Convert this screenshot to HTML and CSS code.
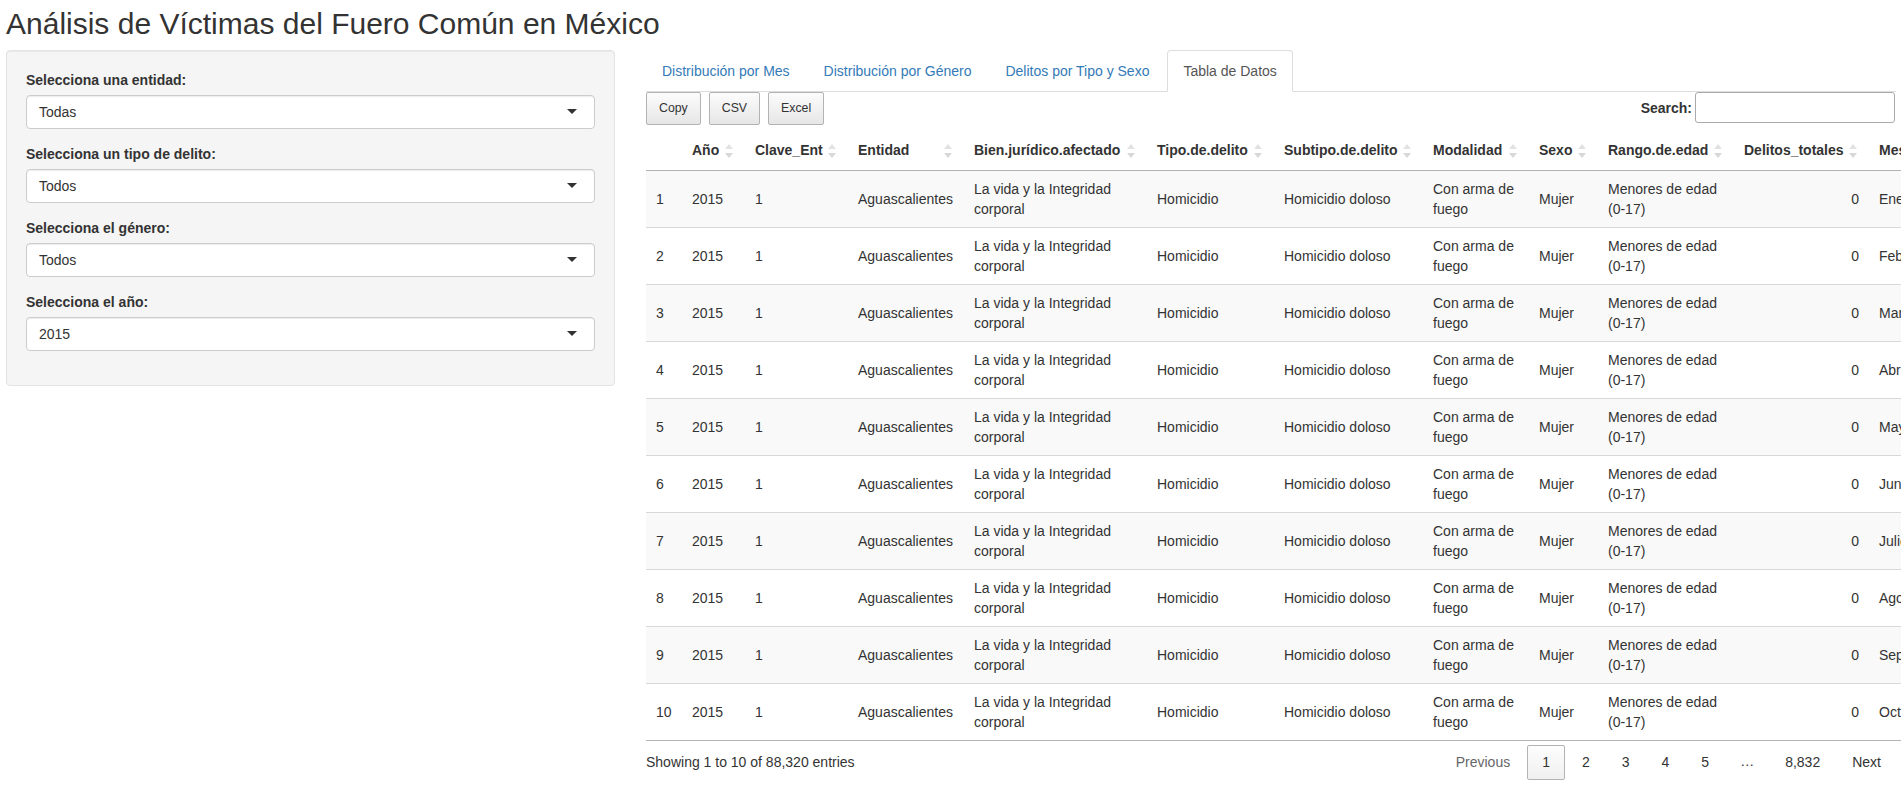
FILE: index.html
```html
<!DOCTYPE html>
<html lang="es">
<head>
<meta charset="utf-8">
<title>Análisis de Víctimas del Fuero Común en México</title>
<link rel="stylesheet" href="styles.css">
</head>
<body>
<div class="page">
  <h2 class="title">Análisis de Víctimas del Fuero Común en México</h2>
  <div class="layout">
    <aside class="well">
      <div class="form-group">
        <label class="lbl">Selecciona una entidad:</label>
        <div class="select">Todas</div>
      </div>
      <div class="form-group">
        <label class="lbl">Selecciona un tipo de delito:</label>
        <div class="select">Todos</div>
      </div>
      <div class="form-group">
        <label class="lbl">Selecciona el género:</label>
        <div class="select">Todos</div>
      </div>
      <div class="form-group">
        <label class="lbl">Selecciona el año:</label>
        <div class="select">2015</div>
      </div>
    </aside>
    <main class="main">
      <ul class="tabs">
        <li><a class="tab">Distribución por Mes</a></li>
        <li><a class="tab">Distribución por Género</a></li>
        <li><a class="tab">Delitos por Tipo y Sexo</a></li>
        <li><a class="tab active">Tabla de Datos</a></li>
      </ul>
      <div class="dt-wrap">
        <div class="toolbar">
          <div class="dt-buttons">
            <button class="dt-btn">Copy</button>
            <button class="dt-btn">CSV</button>
            <button class="dt-btn">Excel</button>
          </div>
          <div class="filter">
            <span class="filter-lbl">Search:</span>
            <span class="filter-input"></span>
          </div>
        </div>
        <table class="dtable">
          <colgroup>
            <col class="c-idx"><col class="c-ano"><col class="c-clave"><col class="c-ent"><col class="c-bien"><col class="c-tipo"><col class="c-sub"><col class="c-mod"><col class="c-sexo"><col class="c-rango"><col class="c-tot"><col class="c-mes">
          </colgroup>
          <thead>
            <tr>
              <th></th>
              <th class="sort">Año<span class="arrows"></span></th>
              <th class="sort">Clave_Ent<span class="arrows"></span></th>
              <th class="sort">Entidad<span class="arrows"></span></th>
              <th class="sort">Bien.jurídico.afectado<span class="arrows"></span></th>
              <th class="sort">Tipo.de.delito<span class="arrows"></span></th>
              <th class="sort">Subtipo.de.delito<span class="arrows"></span></th>
              <th class="sort">Modalidad<span class="arrows"></span></th>
              <th class="sort">Sexo<span class="arrows"></span></th>
              <th class="sort">Rango.de.edad<span class="arrows"></span></th>
              <th class="sort">Delitos_totales<span class="arrows"></span></th>
              <th class="sort">Mes<span class="arrows"></span></th>
            </tr>
          </thead>
          <tbody>
            <tr><td>1</td><td>2015</td><td>1</td><td>Aguascalientes</td><td>La vida y la Integridad corporal</td><td>Homicidio</td><td>Homicidio doloso</td><td>Con arma de fuego</td><td>Mujer</td><td>Menores de edad (0-17)</td><td class="num">0</td><td>Enero</td></tr>
            <tr><td>2</td><td>2015</td><td>1</td><td>Aguascalientes</td><td>La vida y la Integridad corporal</td><td>Homicidio</td><td>Homicidio doloso</td><td>Con arma de fuego</td><td>Mujer</td><td>Menores de edad (0-17)</td><td class="num">0</td><td>Febrero</td></tr>
            <tr><td>3</td><td>2015</td><td>1</td><td>Aguascalientes</td><td>La vida y la Integridad corporal</td><td>Homicidio</td><td>Homicidio doloso</td><td>Con arma de fuego</td><td>Mujer</td><td>Menores de edad (0-17)</td><td class="num">0</td><td>Marzo</td></tr>
            <tr><td>4</td><td>2015</td><td>1</td><td>Aguascalientes</td><td>La vida y la Integridad corporal</td><td>Homicidio</td><td>Homicidio doloso</td><td>Con arma de fuego</td><td>Mujer</td><td>Menores de edad (0-17)</td><td class="num">0</td><td>Abril</td></tr>
            <tr><td>5</td><td>2015</td><td>1</td><td>Aguascalientes</td><td>La vida y la Integridad corporal</td><td>Homicidio</td><td>Homicidio doloso</td><td>Con arma de fuego</td><td>Mujer</td><td>Menores de edad (0-17)</td><td class="num">0</td><td>Mayo</td></tr>
            <tr><td>6</td><td>2015</td><td>1</td><td>Aguascalientes</td><td>La vida y la Integridad corporal</td><td>Homicidio</td><td>Homicidio doloso</td><td>Con arma de fuego</td><td>Mujer</td><td>Menores de edad (0-17)</td><td class="num">0</td><td>Junio</td></tr>
            <tr><td>7</td><td>2015</td><td>1</td><td>Aguascalientes</td><td>La vida y la Integridad corporal</td><td>Homicidio</td><td>Homicidio doloso</td><td>Con arma de fuego</td><td>Mujer</td><td>Menores de edad (0-17)</td><td class="num">0</td><td>Julio</td></tr>
            <tr><td>8</td><td>2015</td><td>1</td><td>Aguascalientes</td><td>La vida y la Integridad corporal</td><td>Homicidio</td><td>Homicidio doloso</td><td>Con arma de fuego</td><td>Mujer</td><td>Menores de edad (0-17)</td><td class="num">0</td><td>Agosto</td></tr>
            <tr><td>9</td><td>2015</td><td>1</td><td>Aguascalientes</td><td>La vida y la Integridad corporal</td><td>Homicidio</td><td>Homicidio doloso</td><td>Con arma de fuego</td><td>Mujer</td><td>Menores de edad (0-17)</td><td class="num">0</td><td>Septiembre</td></tr>
            <tr><td>10</td><td>2015</td><td>1</td><td>Aguascalientes</td><td>La vida y la Integridad corporal</td><td>Homicidio</td><td>Homicidio doloso</td><td>Con arma de fuego</td><td>Mujer</td><td>Menores de edad (0-17)</td><td class="num">0</td><td>Octubre</td></tr>
          </tbody>
        </table>
        <div class="footer">
          <div class="info">Showing 1 to 10 of 88,320 entries</div>
          <div class="paginate">
            <span class="pbtn disabled">Previous</span>
            <span class="pbtn current">1</span>
            <span class="pbtn">2</span>
            <span class="pbtn">3</span>
            <span class="pbtn">4</span>
            <span class="pbtn">5</span>
            <span class="ellipsis">…</span>
            <span class="pbtn">8,832</span>
            <span class="pbtn">Next</span>
          </div>
        </div>
      </div>
    </main>
  </div>
</div>
</body>
</html>
```
FILE: styles.css
```css
html, body {
  margin: 0;
  padding: 0;
  overflow-x: hidden;
  background: #fff;
}
body {
  font-family: "Liberation Sans", Arial, Helvetica, sans-serif;
  font-size: 14px;
  line-height: 20px;
  color: #333;
}
.page {
  padding-left: 6px;
}
.title {
  margin: 7px 0 10px;
  font-size: 30px;
  line-height: 33px;
  font-weight: 500;
  color: #333;
}
.layout {
  display: flex;
  align-items: flex-start;
}
.well {
  box-sizing: border-box;
  width: 609px;
  flex: none;
  background: #f5f5f5;
  border: 1px solid #e3e3e3;
  border-radius: 4px;
  box-shadow: inset 0 1px 1px rgba(0,0,0,0.05);
  padding: 19px;
}
.form-group {
  margin-bottom: 15px;
}
.lbl {
  display: block;
  font-weight: bold;
  margin-bottom: 5px;
}
.select {
  position: relative;
  box-sizing: border-box;
  height: 34px;
  padding: 6px 12px;
  background: #fff;
  border: 1px solid #ccc;
  border-radius: 4px;
  box-shadow: inset 0 1px 1px rgba(0,0,0,0.075);
  color: #333;
}
.select::after {
  content: "";
  position: absolute;
  right: 17px;
  top: 50%;
  margin-top: -3px;
  border-style: solid;
  border-width: 5px 5px 0 5px;
  border-color: #333 transparent transparent transparent;
}
.main {
  width: 1250px;
  flex: none;
  margin-left: 31px;
}
.tabs {
  list-style: none;
  margin: 0;
  padding: 0;
  display: flex;
  border-bottom: 1px solid #ddd;
}
.tabs li {
  margin-bottom: -1px;
}
.tab {
  display: block;
  margin-right: 2px;
  padding: 10px 15px;
  line-height: 20px;
  border: 1px solid transparent;
  border-radius: 4px 4px 0 0;
  color: #337ab7;
  text-decoration: none;
}
.tab.active {
  color: #555;
  background: #fff;
  border-color: #ddd #ddd transparent #ddd;
}
.toolbar {
  display: flex;
  justify-content: space-between;
  align-items: flex-start;
  margin-bottom: 5px;
}
.dt-buttons {
  display: flex;
  gap: 8px;
}
.dt-btn {
  box-sizing: border-box;
  height: 33px;
  padding: 6px 12px;
  font-family: inherit;
  font-size: 12.32px;
  line-height: 19px;
  color: #333;
  background: linear-gradient(to bottom, #fcfcfc 0%, #e6e6e6 100%);
  border: 1px solid #b3b3b3;
  border-radius: 2px;
}
.filter {
  display: flex;
  align-items: center;
}
.filter-lbl {
  font-weight: bold;
  margin-right: 3px;
}
.filter-input {
  box-sizing: border-box;
  display: block;
  width: 200px;
  height: 31px;
  border: 1px solid #aaa;
  border-radius: 3px;
  background: #fff;
  margin-right: 1px;
}
.dtable {
  table-layout: fixed;
  width: 1343px;
  border-collapse: separate;
  border-spacing: 0;
  border-bottom: 1px solid #b3b3b3;
}
.c-idx { width: 36px; }
.c-ano { width: 63px; }
.c-clave { width: 103px; }
.c-ent { width: 116px; }
.c-bien { width: 183px; }
.c-tipo { width: 127px; }
.c-sub { width: 149px; }
.c-mod { width: 106px; }
.c-sexo { width: 69px; }
.c-rango { width: 136px; }
.c-tot { width: 135px; }
.c-mes { width: 120px; }
.dtable th {
  position: relative;
  text-align: left;
  font-weight: bold;
  padding: 10px;
  line-height: 20px;
  white-space: nowrap;
  border-bottom: 1px solid #b3b3b3;
}
.arrows {
  position: absolute;
  right: 12px;
  top: 50%;
  width: 8px;
  height: 16px;
  margin-top: -7px;
}
.arrows::before,
.arrows::after {
  content: "";
  position: absolute;
  left: 0;
  border-style: solid;
  border-color: transparent;
}
.arrows::before {
  top: 1px;
  border-width: 0 4px 5px 4px;
  border-bottom-color: #e2e2e2;
}
.arrows::after {
  bottom: 1px;
  border-width: 5px 4px 0 4px;
  border-top-color: #d8d8d8;
}
.dtable td {
  padding: 8px 10px;
  line-height: 20px;
  border-top: 1px solid #d9d9d9;
  vertical-align: middle;
}
.dtable tbody tr:first-child td {
  border-top: none;
}
.dtable tbody tr:nth-child(odd) td {
  background: #f9f9f9;
}
.dtable td.num {
  text-align: right;
}
.footer {
  display: flex;
  justify-content: space-between;
  align-items: flex-start;
}
.info {
  padding-top: 11px;
}
.paginate {
  display: flex;
  padding-top: 4px;
}
.pbtn {
  box-sizing: border-box;
  display: block;
  height: 35px;
  padding: 7px 14px;
  line-height: 19px;
  margin-left: 2px;
  border: 1px solid transparent;
  border-radius: 2px;
  color: #333;
}
.pbtn.disabled {
  color: #666;
}
.pbtn.current {
  border-color: #b3b3b3;
  background: linear-gradient(to bottom, #fdfdfd 0%, #f0f0f0 100%);
}
.ellipsis {
  display: block;
  padding: 7px 14px;
  line-height: 19px;
  margin-left: 2px;
}
```
